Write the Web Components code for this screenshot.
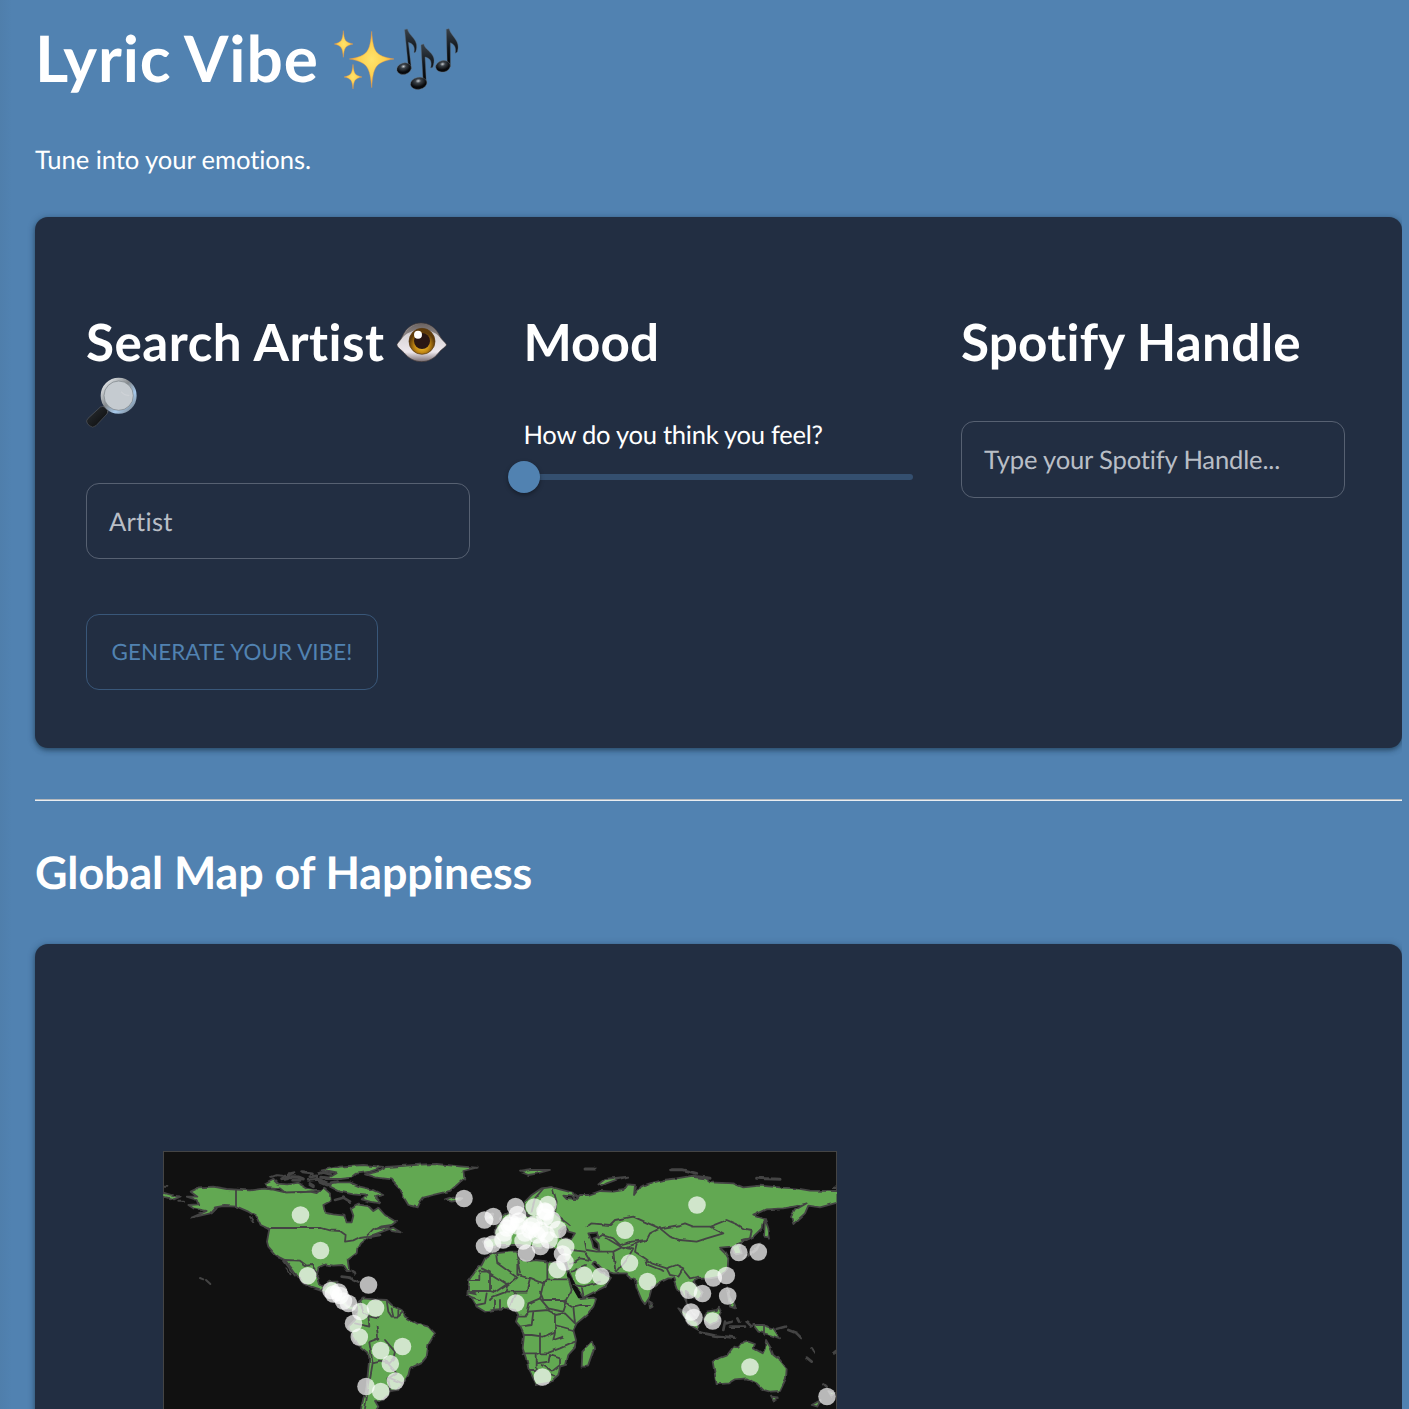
<!DOCTYPE html>
<html lang="en">
<head>
<meta charset="utf-8">
<title>Lyric Vibe</title>
<style>
html,body{margin:0;height:1409px;overflow:hidden}
body{background:#5182b1;font:25.6px/1.5 Lato,sans-serif;color:#fff;font-variant-ligatures:none;text-rendering:geometricPrecision}
</style>
</head>
<body>
<vibe-page>
  <page-title slot="title">Lyric Vibe</page-title>
  <span slot="tagline">Tune into your emotions.</span>
  <vibe-card slot="controls">
    <vibe-column style="--heading-spacing:.5px;--field-spacing:.25px">
      <span slot="heading">Search Artist <emoji-art name="eye"></emoji-art> <emoji-art name="lens"></emoji-art></span>
      <text-field>Artist</text-field>
      <vibe-button>GENERATE YOUR VIBE!</vibe-button>
    </vibe-column>
    <vibe-column>
      <span slot="heading">Mood</span>
      <mood-slider>How do you think you feel?</mood-slider>
    </vibe-column>
    <vibe-column style="--heading-spacing:.22px;--field-spacing:-.17px">
      <span slot="heading">Spotify Handle</span>
      <text-field>Type your Spotify Handle...</text-field>
    </vibe-column>
  </vibe-card>
  <span slot="map-title">Global Map of Happiness</span>
  <vibe-card slot="map" class="map"><happy-map></happy-map></vibe-card>
</vibe-page>
<script>
const define = (name, html, setup) => customElements.define(name, class extends HTMLElement {
  constructor() {
    super();
    this.attachShadow({ mode: 'open' }).innerHTML = html;
  }
  connectedCallback() { if (setup) setup(this); }
});

define('vibe-page', `<style>
:host{display:flex;flex-direction:column;width:1367px;height:1409px;padding-left:35px;box-sizing:content-box;overflow:hidden;
background:linear-gradient(90deg,rgba(60,90,115,.09),transparent 12px)}
header{height:217px;flex:none}
h1{margin:0;padding-top:19px;font-size:64px;line-height:77px;letter-spacing:.85px;word-spacing:-1.4px}
p{margin:0;padding-top:45px;line-height:38px;letter-spacing:-.08px}
hr{border:0;height:2px;width:100%;margin:51px 0 0;flex:none;background:linear-gradient(#b3b7bb 50%,#e9edf1 50%)}
h2{margin:0;height:143px;flex:none;font-size:44.8px;line-height:56px;padding-top:43px;box-sizing:border-box;letter-spacing:-.08px}
</style>
<header><h1><slot name="title"></slot></h1><p><slot name="tagline"></slot></p></header>
<slot name="controls"></slot><hr><h2><slot name="map-title"></slot></h2><slot name="map"></slot>`);

define('page-title', `<style>:host{display:flex;align-items:center;gap:14px;height:77px}.e{display:flex;padding-top:4px}emoji-art{display:flex}</style>
<slot></slot><span class="e"><emoji-art name="sparkles"></emoji-art><emoji-art name="notes"></emoji-art></span>`);

define('vibe-card', `<style>
:host{display:flex;box-sizing:border-box;width:1367px;height:531px;flex:none;background:#222e42;border-radius:13px;padding:94px 51px 0;gap:53.5px;
box-shadow:0 2px 5px rgba(20,45,65,.6),0 1px 8px rgba(20,45,65,.2)}
:host(.map){height:620px;padding:207px 0 0 128px}
</style><slot></slot>`);

define('vibe-column', `<style>
:host{display:block;width:384px;flex:none}
h2{margin:0 0 48.6px;font-size:51.2px;line-height:61.6px;letter-spacing:var(--heading-spacing,0)}
</style><h2><slot name="heading"></slot></h2><slot></slot>`);

define('text-field', `<style>
:host{display:flex;align-items:center;box-sizing:border-box;width:384px;height:76.4px;padding:2px 22px 0;border:1px solid #576172;border-radius:13px;color:#b9bec6;letter-spacing:var(--field-spacing,0)}
</style><slot></slot>`);

define('vibe-button', `<style>
:host{display:flex;align-items:center;justify-content:center;box-sizing:border-box;width:292px;height:76px;margin-top:54.8px;border:1px solid #395779;border-radius:13px;color:#5182b1;font-size:22.4px;letter-spacing:.08px}
</style><slot></slot>`);

define('mood-slider', `<style>
:host{display:block;margin-top:-5.2px}
.label{display:block;line-height:38px;letter-spacing:-.28px}
.track{display:flex;align-items:center;width:389px;height:6px;margin-top:20px;border-radius:3px;background:#344f6f}
.thumb{width:32px;height:32px;flex:none;margin-left:-16px;border-radius:50%;background:#5182b1;box-shadow:0 2px 4px rgba(0,0,0,.35)}
</style><span class="label"><slot></slot></span><div class="track"><div class="thumb"></div></div>`);

const art = {
sparkles: ['width:64px;height:64px', '0 0 192 192', `
<defs><radialGradient id="g"><stop offset="0" stop-color="#ffe36b"/><stop offset=".6" stop-color="#fdd04e"/><stop offset="1" stop-color="#ee9f3e"/></radialGradient></defs>
<g fill="url(#g)" stroke="#ec9b45" stroke-width="1.3">
<path d="M116 10C121 72 126 84 183 93C126 102 121 118 116 179C111 118 104 102 49 93C104 84 111 72 116 10Z"/>
<path d="M31 8C34 38 36 42 60 48C36 54 34 58 31 88C28 58 26 54 4 48C26 42 28 38 31 8Z"/>
<path d="M60 109C63 138 65 142 87 147C65 152 63 156 60 183C57 156 55 152 33 147C55 142 57 138 60 109Z"/></g>`],
notes: ['width:64px;height:64px', '0 0 192 192', `
<defs><linearGradient id="n" x2="0" y2="1"><stop stop-color="#39424b"/><stop offset=".5" stop-color="#11171e"/><stop offset="1" stop-color="#000"/></linearGradient>
<radialGradient id="h" cy=".3"><stop stop-color="#c7cdd2"/><stop offset=".35" stop-color="#3b4249"/><stop offset="1" stop-color="#07090c"/></radialGradient></defs>
<g fill="url(#n)" stroke="#5a6670" stroke-width="1.2">
<path d="M23 5L31 3C37 27 69 34 56 72L51 74C56 54 45 46 34 43L43 122L35 125Z"/>
<path d="M72 51L80 48C86 72 124 75 107 118L101 120C107 97 96 89 84 87L88 166L79 168Z"/>
<path d="M148 4L156 2C163 27 192 37 181 72L175 76C179 56 170 48 160 44L160 116L151 118Z"/></g>
<g fill="url(#h)" stroke="#6b737a" stroke-width="1.2"><ellipse cx="21" cy="122" rx="22" ry="17" transform="rotate(-15 21 122)"/><ellipse cx="65" cy="166" rx="25" ry="18" transform="rotate(-10 65 166)"/><ellipse cx="138" cy="115" rx="22" ry="17" transform="rotate(-12 138 115)"/></g>`],
eye: ['width:51px;height:40px;vertical-align:-1px;margin-left:-2px', '0 0 153 120', `
<defs><linearGradient id="w" x2="0" y2="1"><stop stop-color="#77716f"/><stop offset=".3" stop-color="#d8d4d6"/><stop offset=".75" stop-color="#eee8ed"/><stop offset="1" stop-color="#776c70"/></linearGradient>
<radialGradient id="i" cy=".65"><stop stop-color="#ffd23b"/><stop offset=".55" stop-color="#c58a13"/><stop offset="1" stop-color="#5f3b0a"/></radialGradient></defs>
<path d="M3 67C5 62 14 55 20 42C42-10 108-10 131 42C138 55 148 61 151 67C153 73 137 81 128 92C102 128 52 128 24 92C14 82 2 75 3 67Z" fill="url(#w)" stroke="#3f3635" stroke-width="2"/>
<path d="M14 54C42-11 112-11 138 54C112 12 42 12 14 54Z" fill="#625957" opacity=".65"/>
<circle cx="78" cy="58" r="39" fill="url(#i)" stroke="#57370c" stroke-width="2"/><circle cx="78" cy="57" r="24" fill="#2a1714"/><circle cx="66" cy="38" r="12" fill="#fff"/>`],
lens: ['width:52px;height:52px;vertical-align:-6px', '0 0 156 156', `
<defs><linearGradient id="r" x2="1" y2="1"><stop stop-color="#f4f7f9"/><stop offset=".45" stop-color="#868b8f"/><stop offset=".7" stop-color="#a6c9ec"/><stop offset="1" stop-color="#747b81"/></linearGradient>
<linearGradient id="k" x2="1" y2="1"><stop stop-color="#777"/><stop offset=".35" stop-color="#202326"/><stop offset="1" stop-color="#08090a"/></linearGradient></defs>
<path d="M52 88L67 104L60 113L44 98Z" fill="#a4a6a8"/>
<path d="M43 90Q51 85 59 93L65 101Q67 107 61 113L30 146Q20 155 10 146L4 139Q-2 132 6 124Z" fill="url(#k)" stroke="#64696e" stroke-width="1.5"/>
<circle cx="98" cy="56" r="49" fill="#c5cbd0" stroke="url(#r)" stroke-width="10"/><circle cx="98" cy="56" r="44" fill="none" stroke="#777e84" stroke-width="2"/><path d="M105 44L116 53 130 56" fill="none" stroke="#d7dadd" stroke-width="4" opacity=".5"/>`]
};
define('emoji-art', `<style>:host{display:inline}svg{display:inline-block;overflow:visible}</style>`, el => {
  const [style, box, body] = art[el.getAttribute('name')];
  el.shadowRoot.innerHTML += `<svg style="${style}" viewBox="${box}">${body}</svg>`;
});

/* Country markers: x, y on the map canvas */
const pins = [[300.5,1215],[320.5,1250.5],[307.7,1275.7],[368.5,1285],[331,1290.5],[338.5,1292],[333.5,1294],[340,1295.5],[343.5,1301],[348.5,1303.5],[360.5,1311.5],[375.5,1308],[353.5,1323.5],[359.3,1337],[402.5,1346.5],[380.7,1350.5],[390.3,1363.8],[395.5,1381],[366,1386.5],[380.7,1391.5],[464,1198.5],[484.5,1220],[493.3,1216.5],[484.5,1246],[492.5,1244],[503,1240],[504,1233],[507,1228],[509,1225],[511,1223],[515.5,1206.5],[517.5,1214.5],[518,1226],[519,1221],[523,1241],[525,1233],[526.5,1253],[530,1230],[531.5,1226],[534,1224],[534.5,1207],[540,1230],[537,1235],[540.5,1246.5],[545,1217],[546,1212],[548,1204.5],[545,1211],[552,1220],[546,1234],[549,1240],[558,1229.5],[565.7,1247],[562.5,1254],[565,1262],[557.3,1269.5],[584,1275.3],[600.8,1276.3],[515.8,1303],[542.5,1377],[625,1230.3],[629.5,1263],[647.5,1281.5],[697,1205],[688.7,1290.3],[702.5,1293.5],[713.3,1278],[726.3,1275.5],[727.7,1296],[691,1312],[694,1317.5],[712.7,1321],[738.8,1252.5],[758.3,1252],[750,1367],[827,1396.5]];

define('happy-map', `<style>
:host{display:block;width:674px;height:413px;flex:none}
svg{display:block}
</style>
<svg width="674" height="413" viewBox="163 1151 674 413">
<defs><filter id="coast" filterUnits="userSpaceOnUse" x="150" y="1140" width="700" height="430" color-interpolation-filters="sRGB"><feTurbulence type="fractalNoise" baseFrequency=".12" numOctaves="1" seed="4"/><feDisplacementMap in="SourceGraphic" scale="3.5" xChannelSelector="R" yChannelSelector="G"/></filter>
<clipPath id="c"><rect x="163" y="1151" width="674" height="413"/></clipPath></defs>
<rect x="163.5" y="1151.5" width="673" height="412" fill="#111" stroke="#444"/>
<g clip-path="url(#c)">
<g filter="url(#coast)" fill="#62a852" stroke="#444" stroke-width="5.4" stroke-linejoin="round" stroke-linecap="round">
<g transform="translate(160 1145) scale(.33333)">
<path d="M118 127L160 125 200 132 230 134 270 136 310 131 340 134 375 142 420 142 450 140 470 144 490 128 510 145 512 168 490 180 495 203 520 208 553 212 560 232 575 232 580 212 572 190 590 178 625 183 640 198 655 188 675 210 708 230 695 240 665 244 645 252 685 246 695 258 722 262 700 248 660 262 625 275 600 295 592 310 590 325 563 345 568 378 560 378 548 360 520 362 495 358 475 368 470 395 476 415 490 425 508 410 533 410 525 430 540 440 552 458 562 478 592 490 585 500 562 492 530 465 505 448 480 436 455 428 430 415 410 390 395 370 375 345 360 338 345 328 325 305 321 290 326 262 328 252 302 240 290 215 265 200 230 185 190 183 165 187 150 205 95 218 140 198 100 190 85 180 115 178 110 165 80 155 112 155 92 140Z"/>
<path d="M10 143L45 153 62 154 42 163 10 155Z"/>
<path fill="none" d="M228 134V185M328 249H485L510 256 540 258 557 270 555 290 580 286 600 276 620 273 640 252M375 345L420 347 440 362 455 360 470 380M485 435L500 418M372 348L405 392M378 370L392 388M270 215L280 230"/>
<path d="M315 118L340 104 352 116 385 118 415 113 440 128 480 136 440 140 375 142 360 130 320 126Z"/>
<path fill="none" stroke-width="9" d="M335 97L350 92 367 94M362 104L385 101M385 87L402 83M375 94L415 96 430 102M398 105L420 106M428 80L457 84M450 95L470 93M445 106L475 103 490 108M450 116L460 122M478 86L490 82 512 88M485 97L510 100M480 112L500 120 515 118"/>
<path d="M120 399L130 403M138 405L151 417" stroke-width="6" fill="none"/><path d="M9 125H22M55 170H72M155 205L170 190" stroke-width="6" fill="none"/>
</g>
<g transform="translate(320 1145) scale(.33333)">
<path d="M135 88L180 78 200 66 300 59 350 57 420 64 470 68 430 78 433 100 405 125 390 138 340 150 310 158 300 172 293 187 265 180 250 155 240 130 215 103 165 97Z"/>
<path d="M5 76L60 65 130 60 190 66 150 80 110 86 95 98 60 102 20 102 50 85Z"/>
<path d="M35 112L90 112 120 125 155 133 190 150 165 156 182 175 150 170 125 163 140 152 100 148 60 140 30 125Z"/>
<path fill="none" stroke-width="8" d="M0 105L25 115 50 110M45 165L70 158 90 170M185 250L205 245M150 275L180 270M65 395L90 398 115 410M95 378L105 385"/>
<path d="M110 475L130 460 165 463 200 465 215 480 245 495 255 515 290 535 325 545 345 565 325 600 320 635 305 653 270 670 265 690 250 715 235 735 210 738 205 750 190 765 165 768 175 785 165 800H122L130 760 138 740 142 700 148 640 145 625 115 600 100 575 85 545 105 525 112 500Z"/>
<path fill="none" d="M122 470L130 500 150 515 175 520M200 466L205 500 215 515 235 515 250 500M105 535L148 545 145 515M150 590L175 580 170 545M148 592L158 655 180 650 205 655 220 640 225 620 195 585M158 655L150 700 140 760 135 790M195 645L230 685 205 700 210 735M212 700L248 715M215 490L220 513M235 495V513"/>
</g>
<g transform="translate(460 1145) scale(.33333)">
<path d="M190 175L215 150 245 130 275 126 300 133 335 142 352 152 325 158 345 165 360 150 385 150 420 138 460 140 490 135 500 118 525 120 522 150 540 125 570 115 610 105 650 100 700 92 735 100 750 112 820 115 850 127 900 122 965 128 1010 130 1050 137 1132 138V173L1080 187 1045 182 1035 205 1000 237 993 215 1005 195 1040 175 1010 183 970 190 920 193 880 212 912 222 905 250 880 275 850 290 838 302 845 325 825 328 815 305 780 308 795 322 805 340 803 370 780 395 750 400 715 402 700 410 725 440 715 465 695 455 677 440 680 480 705 510 690 495 665 440 652 435 640 400 625 400 600 412 575 430 567 460 555 478 545 465 530 430 525 405 510 400 500 385 460 385 430 375 405 350 395 355 420 380 453 398 435 425 370 458 345 420 325 375 315 345 310 320 260 300 240 310 180 300 120 300 85 310 68 290 105 275 110 240 150 220 190 210 215 215 195 200Z"/>
<path d="M100 325L150 320 172 320 175 340 200 350 225 345 265 350 310 352 320 370 325 395 340 425 355 450 362 462 400 458 408 462 400 485 380 510 350 535 340 555 348 585 345 608 325 630 318 660 300 665 295 690 270 712 230 720 220 700 205 670 198 640 188 610 192 570 180 545 168 530 175 510 165 495 140 490 100 495 75 500 50 485 35 460 22 445 28 405 45 380 65 360 75 340Z"/>
<path d="M396 590L402 610 383 665 365 665 367 620Z"/>
<path fill="#111" stroke="none" d="M170 322L205 300 225 345 200 345ZM245 312L310 312 305 350 265 348ZM325 380L343 412 365 458 355 460 335 425 320 390Z"/>
<path fill="#111" d="M297 260L315 245 325 260 345 265 335 280 300 280ZM385 265L410 262 415 275 400 280 415 295 418 316 400 308 396 290ZM310 152L340 155 345 165 320 162Z"/>
<path fill="none" d="M28 405H58V380H82L145 420 172 398 112 355 108 325M65 370L90 382V438L35 438M90 438L105 442 145 415 140 440 100 455 90 465M140 440L200 440 210 400 172 390 172 345 180 385M208 397L250 415 240 460 205 475 200 500M262 350V402L250 415M262 403H325M325 400L335 435 315 470 310 465 250 465 240 440M315 470L340 485 360 480 390 480M340 485L345 535M240 460L265 490 310 500 320 470M205 500L265 495 285 505 285 560 250 575 215 570 190 570M220 500L215 540 180 545M172 515H195L205 500M285 510L315 505 345 535M285 540L340 555M285 560L280 585 310 575M240 565V625H188M240 625H260L300 610 345 590M230 625V675H210M230 655L265 650 270 630 300 640 300 660M245 660L275 680 300 660M275 688L283 692M165 445L150 485M120 465V495M105 465V490M80 445L75 475 50 480M25 440L50 445M30 455L60 465"/>
<path fill="none" d="M250 130L225 160 215 200M280 135L290 170 285 205 330 240M335 315L375 320 390 345 360 340 330 360M375 290L380 315 410 320 460 320 465 370 475 385M460 320L490 305 520 310 500 345 475 375M380 245L395 235 450 240 465 225 520 215 565 235 600 250 570 265 560 285 515 290 480 300 460 280 430 270 415 280M440 280L490 310 530 295 560 285M530 300L525 320 555 340 575 355 620 370 650 360 670 370 655 395 630 390 620 370M555 340L560 358 610 378M600 250L660 240 675 235 700 245 750 245 790 265 740 280 710 290 660 285 630 275 600 250M750 245L800 225 835 240 850 250 875 255 870 280 845 285M670 375L690 400 715 395M340 420L370 425 420 410M335 380L375 360M365 425L370 450M815 305L850 290"/>
<path d="M180 80L215 75 270 75 230 86 205 90Z"/><path fill="none" stroke-width="9" d="M375 72H405M635 74L665 74 710 85M700 94L750 100M890 100L960 103M1120 126H1130"/><path d="M415 118L435 102 505 95 470 104 440 115 425 124Z"/>
<path d="M567 468L578 485 570 490ZM915 222L925 250 930 278 912 275ZM900 295L890 315 870 330 850 340 885 315Z"/>
<path d="M655 490L690 510 715 540 715 555 690 540ZM740 500L770 495 780 485 785 495 770 530 750 540 730 525ZM800 425L808 450 820 480 825 490 810 485ZM880 540L910 540 940 550 960 580 930 570 895 560Z"/>
<path fill="none" stroke-width="8" d="M720 562L765 572 825 578M795 530L790 555M800 535L815 530M835 520L840 530M810 545L855 545M860 530L875 545M950 552L975 545M985 555L1010 565 1025 580M1055 610L1060 618M1040 638L1055 650M1120 625L1128 618M1090 718L1100 728"/><path fill="none" d="M912 540V570"/>
<path d="M758 650L765 645 800 632 820 605 835 608 845 595 865 590 885 597 880 610 908 625 915 610 918 585 930 605 940 630 960 645 980 670 978 700 960 738 930 740 910 735 890 715 875 708 860 700 825 703 805 715 770 718 765 690ZM933 755L950 757 942 770ZM1105 738L1125 745 1115 755ZM1055 780L1082 765 1072 785Z"/>
<path d="M7 160L-20 155-45 163-25 170 0 165ZM75 220L100 205 95 225ZM120 220L150 200 155 240Z"/>
</g>
</g>
<g id="pins" fill="#fff" fill-opacity=".7"></g>
</g>
</svg>`, el => {
  el.shadowRoot.getElementById('pins').innerHTML = pins.map(([x, y]) => `<circle cx="${x}" cy="${y}" r="8.8"/>`).join('');
});
</script>
</body>
</html>
